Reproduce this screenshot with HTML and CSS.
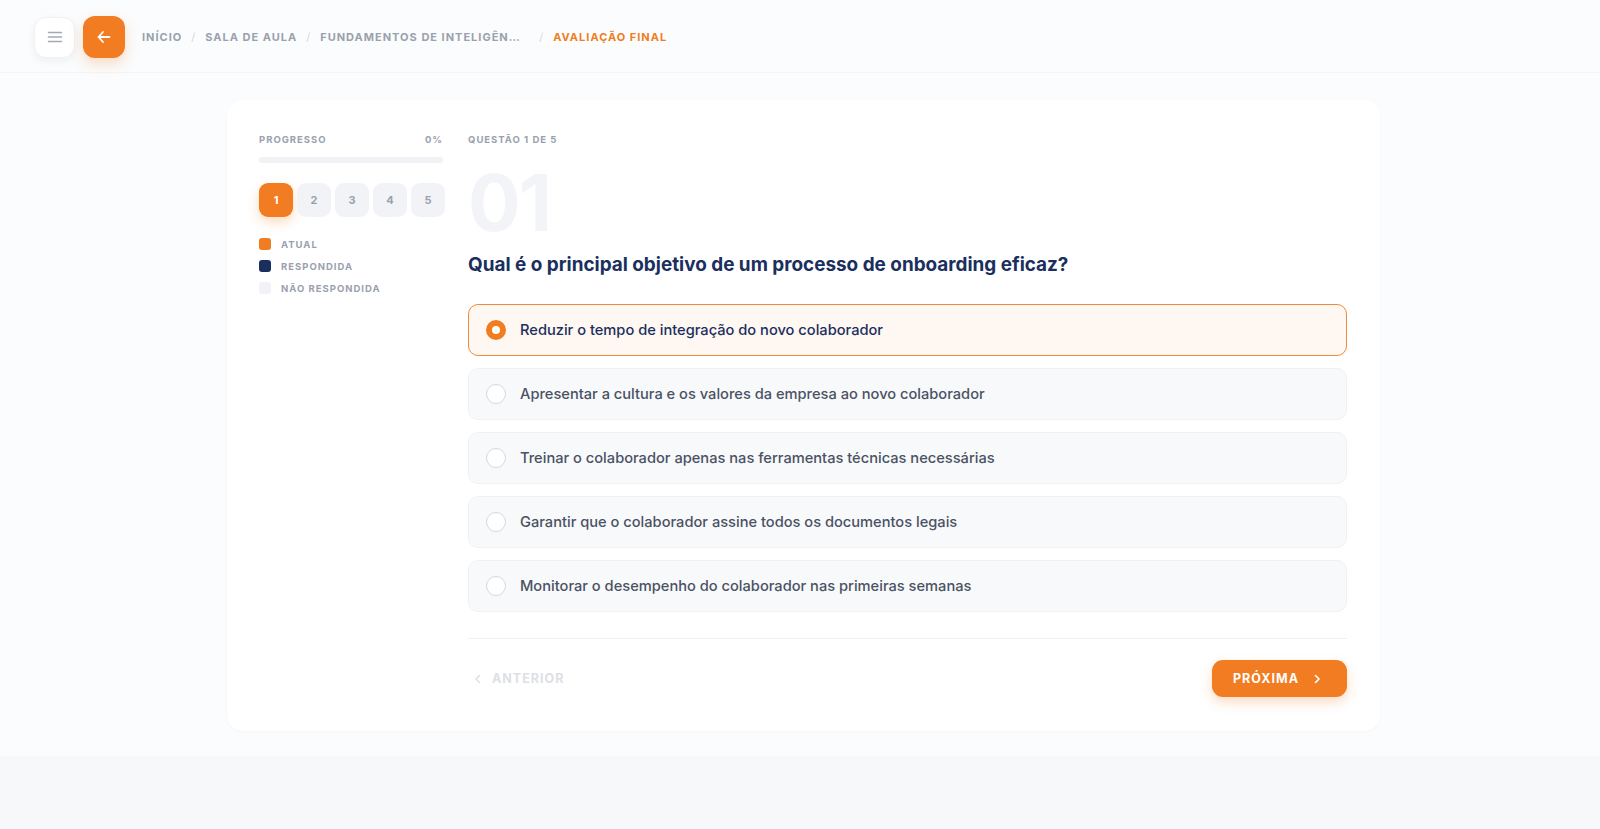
FILE: index.html
```html
<!DOCTYPE html>
<html lang="pt-BR">
<head>
  <meta charset="UTF-8">
  <meta name="viewport" content="width=device-width, initial-scale=1.0">
  <title>Avaliação Final</title>
  <link rel="stylesheet" href="styles.css">
</head>
<body>
  <header class="topbar">
    <button type="button" class="icon-btn menu-btn" aria-label="Menu">
      <svg width="18" height="18" viewBox="0 0 18 18" fill="none" stroke="#a3a9b6" stroke-width="1.5" stroke-linecap="round">
        <path d="M2.5 4.5h13M2.5 9h13M2.5 13.5h13"/>
      </svg>
    </button>
    <button type="button" class="icon-btn back-btn" aria-label="Voltar">
      <svg width="18" height="18" viewBox="0 0 18 18" fill="none" stroke="#ffffff" stroke-width="1.8" stroke-linecap="round" stroke-linejoin="round">
        <path d="M14.5 9h-11M8 4L3.5 9 8 14"/>
      </svg>
    </button>
    <nav class="crumbs">
      <span class="crumb">Início</span>
      <span class="sep">/</span>
      <span class="crumb">Sala de aula</span>
      <span class="sep">/</span>
      <span class="crumb crumb-long">Fundamentos de Inteligência Artificial</span>
      <span class="sep">/</span>
      <span class="crumb current">Avaliação final</span>
    </nav>
  </header>

  <main class="page">
    <section class="card">
      <!-- lateral: progresso -->
      <aside class="side">
        <div class="side-head">
          <span>Progresso</span>
          <span>0%</span>
        </div>
        <div class="bar"><div class="bar-fill" style="width:0%"></div></div>

        <div class="steps">
          <button type="button" class="step active">1</button>
          <button type="button" class="step">2</button>
          <button type="button" class="step">3</button>
          <button type="button" class="step">4</button>
          <button type="button" class="step">5</button>
        </div>

        <ul class="legend">
          <li><span class="dot dot-current"></span>Atual</li>
          <li><span class="dot dot-done"></span>Respondida</li>
          <li><span class="dot dot-empty"></span>Não respondida</li>
        </ul>
      </aside>

      <!-- questão -->
      <div class="quiz">
        <div class="q-label">Questão 1 de 5</div>
        <div class="q-number">01</div>
        <h1 class="q-title">Qual é o principal objetivo de um processo de onboarding eficaz?</h1>

        <div class="options">
          <label class="option selected">
            <span class="radio"></span>
            Reduzir o tempo de integração do novo colaborador
          </label>
          <label class="option">
            <span class="radio"></span>
            Apresentar a cultura e os valores da empresa ao novo colaborador
          </label>
          <label class="option">
            <span class="radio"></span>
            Treinar o colaborador apenas nas ferramentas técnicas necessárias
          </label>
          <label class="option">
            <span class="radio"></span>
            Garantir que o colaborador assine todos os documentos legais
          </label>
          <label class="option">
            <span class="radio"></span>
            Monitorar o desempenho do colaborador nas primeiras semanas
          </label>
        </div>

        <div class="quiz-foot">
          <button type="button" class="prev-btn" disabled>
            <svg width="12" height="12" viewBox="0 0 12 12" fill="none" stroke="currentColor" stroke-width="1.6" stroke-linecap="round" stroke-linejoin="round"><path d="M7.5 2.5L4 6l3.5 3.5"/></svg>
            Anterior
          </button>
          <button type="button" class="next-btn">
            Próxima
            <svg width="12" height="12" viewBox="0 0 12 12" fill="none" stroke="currentColor" stroke-width="1.6" stroke-linecap="round" stroke-linejoin="round"><path d="M4.5 2.5L8 6l-3.5 3.5"/></svg>
          </button>
        </div>
      </div>
    </section>
  </main>
</body>
</html>
```

FILE: styles.css
```css
* {
  box-sizing: border-box;
}

body {
  margin: 0;
  background: #f7f8fa;
  font-family: "Inter", "Noto Sans", sans-serif;
  color: #1b2f5e;
}

button {
  font-family: inherit;
  border: none;
  cursor: pointer;
}

/* barra superior */
.topbar {
  height: 73px;
  display: flex;
  align-items: center;
  padding: 2px 0 0 34px;
  background: #fbfcfd;
  border-bottom: 1px solid #f4f5f8;
}

.icon-btn {
  display: flex;
  align-items: center;
  justify-content: center;
  border-radius: 12px;
  padding: 0;
}

.menu-btn {
  width: 41px;
  height: 41px;
  background: #ffffff;
  border: 1px solid #eff1f4;
  box-shadow: 0 3px 8px rgba(20, 30, 60, 0.06);
}

.back-btn {
  width: 42px;
  height: 42px;
  margin-left: 8px;
  background: #f17c21;
  box-shadow: 0 6px 14px rgba(241, 124, 33, 0.25);
}

.crumbs {
  display: flex;
  align-items: center;
  margin-left: 17px;
  font-size: 11px;
  font-weight: 700;
  letter-spacing: 1px;
  text-transform: uppercase;
  color: #9aa1ae;
}

.sep {
  color: #d5d9e0;
  font-weight: 400;
  margin: 0 9px;
}

.crumb-long {
  max-width: 210px;
  white-space: nowrap;
  overflow: hidden;
  text-overflow: ellipsis;
  padding-right: 5px;
}

.crumb.current {
  color: #f17c21;
}

/* conteúdo */
.page {
  background: #fbfcfd;
  padding: 27px 220px 25px 227px;
}

.card {
  background: #ffffff;
  border-radius: 16px;
  box-shadow: 0 1px 3px rgba(20, 30, 60, 0.03);
  padding: 32px 33px 34px 32px;
  display: grid;
  grid-template-columns: 184px 1fr;
  gap: 25px;
}

.side-head {
  display: flex;
  justify-content: space-between;
  font-size: 9.5px;
  font-weight: 700;
  letter-spacing: 1px;
  text-transform: uppercase;
  color: #9aa1ae;
  line-height: 15px;
}

.bar {
  height: 6px;
  margin-top: 10px;
  border-radius: 6px;
  background: #f1f2f6;
  overflow: hidden;
}

.bar-fill {
  height: 100%;
  background: #f17c21;
}

.steps {
  display: flex;
  gap: 4px;
  margin-top: 20px;
}

.step {
  flex: none;
  width: 34px;
  height: 34px;
  border-radius: 9px;
  background: #f2f3f6;
  color: #9aa1ae;
  font-size: 11px;
  font-weight: 700;
}

.step.active {
  background: #f17c21;
  color: #ffffff;
  box-shadow: 0 5px 12px rgba(241, 124, 33, 0.28);
}

.legend {
  list-style: none;
  margin: 21px 0 0;
  padding: 0;
  display: flex;
  flex-direction: column;
  gap: 10px;
}

.legend li {
  display: flex;
  align-items: center;
  gap: 10px;
  height: 12px;
  font-size: 9.5px;
  font-weight: 700;
  letter-spacing: 1px;
  text-transform: uppercase;
  color: #9aa1ae;
}

.dot {
  width: 12px;
  height: 12px;
  border-radius: 3px;
}

.dot-current { background: #f17c21; }
.dot-done { background: #1b2f5e; }
.dot-empty { background: #f2f3f6; }

/* questão */
.q-label {
  font-size: 9.5px;
  font-weight: 700;
  letter-spacing: 1px;
  text-transform: uppercase;
  color: #9aa1ae;
  line-height: 15px;
}

.q-number {
  margin-top: 17px;
  font-size: 78px;
  font-weight: 700;
  line-height: 1;
  letter-spacing: -2px;
  color: #f3f4f7;
}

.q-title {
  margin: 10px 0 0;
  font-size: 18.9px;
  font-weight: 700;
  line-height: 25px;
  color: #1b2f5e;
}

.options {
  display: flex;
  flex-direction: column;
  gap: 12px;
  margin-top: 27px;
}

.option {
  height: 52px;
  display: flex;
  align-items: center;
  gap: 14px;
  padding: 0 16px 0 17px;
  border-radius: 10px;
  background: #f8f9fb;
  border: 1px solid #eff1f4;
  font-size: 14.65px;
  font-weight: 500;
  color: #4a5263;
  cursor: pointer;
}

.option.selected {
  background: #fff7f1;
  border: 1.5px solid #f08a3a;
  color: #1b2f5e;
}

.radio {
  width: 20px;
  height: 20px;
  border-radius: 50%;
  border: 1.5px solid #d3d7de;
  background: #ffffff;
  flex: none;
}

.option.selected .radio {
  border: 6px solid #f17c21;
}

.quiz-foot {
  display: flex;
  justify-content: space-between;
  align-items: center;
  margin-top: 26px;
  padding-top: 21px;
  border-top: 1px solid #f1f2f5;
}

.prev-btn {
  display: flex;
  align-items: center;
  gap: 8px;
  background: none;
  padding: 0 0 0 4px;
  font-size: 12.5px;
  font-weight: 700;
  letter-spacing: 1px;
  text-transform: uppercase;
  color: #dde0e6;
  cursor: default;
}

.next-btn {
  display: flex;
  align-items: center;
  gap: 12px;
  height: 37px;
  padding: 0 24px 0 21px;
  border-radius: 11px;
  background: #f17c21;
  color: #ffffff;
  font-size: 12.5px;
  font-weight: 700;
  letter-spacing: 1px;
  text-transform: uppercase;
  box-shadow: 0 5px 12px rgba(241, 124, 33, 0.28);
}
```
